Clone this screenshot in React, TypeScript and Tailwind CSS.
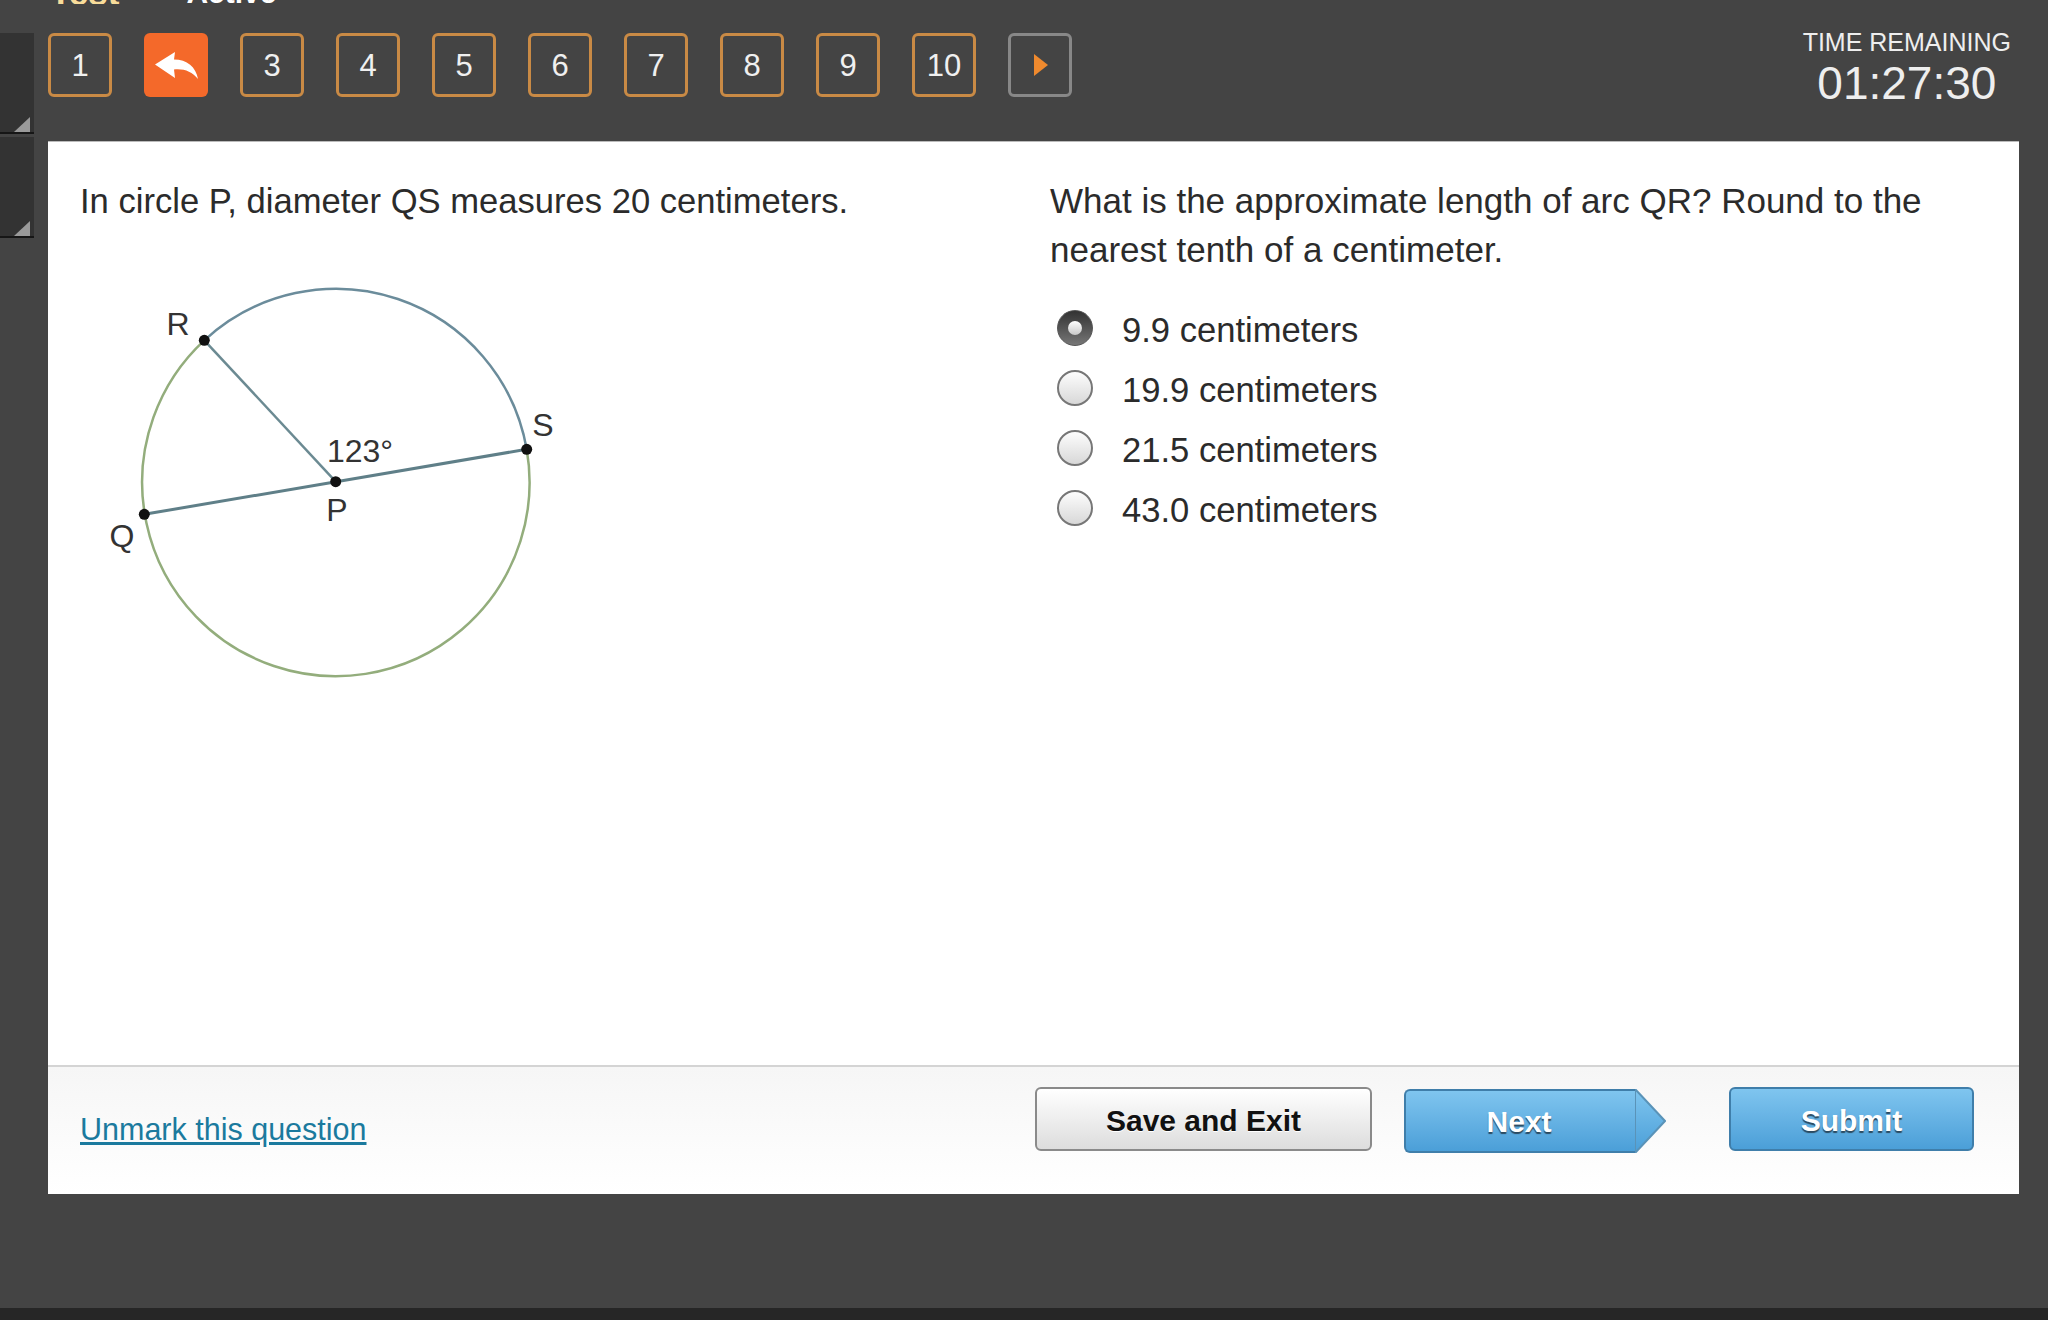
import React from 'react';

const navItems = ['1', 'back', '3', '4', '5', '6', '7', '8', '9', '10'];
const answers = ['9.9 centimeters', '19.9 centimeters', '21.5 centimeters', '43.0 centimeters'];

const NavButton = ({ label }: { label: string }) => {
    if (label === 'back') {
        return (
            <div className="w-16 h-16 rounded-md bg-[#f4692a] flex items-center justify-center">
                <svg width="43" height="27" viewBox="0 0 43 27">
                    <path d="M0 12.5 L20 0 L19 7.5 C32 7.5 41 15 43 27 C37 19.5 29 16.5 19 17.5 L20 26 Z" fill="#fff" />
                </svg>
            </div>
        );
    }
    return (
        <div className="w-16 h-16 pt-[2px] rounded-md border-[3px] border-[#c98a45] flex items-center justify-center text-[31px] text-[#f0f0f0]">
            {label}
        </div>
    );
};

const Radio = ({ checked }: { checked?: boolean }) => {
    if (checked) {
        return (
            <div className="w-9 h-9 rounded-full bg-linear-to-b from-[#333333] to-[#777777] border border-[#555555] flex items-center justify-center">
                <div className="w-3.5 h-3.5 rounded-full bg-linear-to-b from-[#ffffff] to-[#c8c8c8]" />
            </div>
        );
    }
    return <div className="w-9 h-9 rounded-full border-2 border-[#777777] bg-linear-to-b from-[#fdfdfd] to-[#d8d8d8]" />;
};

const CircleDiagram = () => (
    <svg width="500" height="430" viewBox="0 0 500 430" className="ml-[10px] mt-[35px]">
        <path d="M114.3 79.3 A193.7 193.7 0 0 1 436.7 188.3" fill="none" stroke="#6b8c9b" strokeWidth="2.5" />
        <path d="M436.7 188.3 A193.7 193.7 0 1 1 114.3 79.3" fill="none" stroke="#93ad7c" strokeWidth="2.5" />
        <line x1="54.3" y1="253.3" x2="436.7" y2="188.3" stroke="#5f7f88" strokeWidth="3" />
        <line x1="114.3" y1="79.3" x2="245.7" y2="220.7" stroke="#6b8a92" strokeWidth="2.5" />
        <circle cx="114.3" cy="79.3" r="5.5" fill="#111" />
        <circle cx="436.7" cy="188.3" r="5.5" fill="#111" />
        <circle cx="54.3" cy="253.3" r="5.5" fill="#111" />
        <circle cx="245.7" cy="220.7" r="5.5" fill="#111" />
        <g fontSize="32" fill="#333" textAnchor="middle">
            <text x="88" y="74">R</text>
            <text x="453" y="175">S</text>
            <text x="32" y="286">Q</text>
            <text x="247" y="260">P</text>
            <text x="270" y="201">123°</text>
        </g>
    </svg>
);

export default function App() {
    return (
        <div className="w-[2048px] h-[1320px] flex flex-col overflow-hidden bg-[#444444] [font-family:'Liberation_Sans',sans-serif]">
            <div className="flex h-[1308px]">
                {/* Collapsed side rail */}
                <div className="w-[34px] pt-[33px] flex flex-col gap-[3px]">
                    <div className="h-[101px] bg-[#333333] border-b-2 border-[#161616] flex items-end justify-end pr-1">
                        <div className="w-0 h-0 border-l-[16px] border-l-transparent border-b-[15px] border-b-[#9a9a9a]" />
                    </div>
                    <div className="h-[101px] bg-[#333333] border-b-2 border-[#161616] flex items-end justify-end pr-1">
                        <div className="w-0 h-0 border-l-[16px] border-l-transparent border-b-[15px] border-b-[#9a9a9a]" />
                    </div>
                </div>

                <div className="ml-[14px] flex-1 flex flex-col">
                    {/* Clipped title strip */}
                    <div className="h-1 overflow-hidden flex items-end">
                        <span className="ml-[2px] -mb-[7px] text-[35px] leading-[36px] font-bold text-[#f8dc9a]">Test</span>
                        <span className="ml-[67px] -mb-[7px] text-[30px] leading-[36px] font-bold text-white">Active</span>
                    </div>

                    {/* Question nav and timer */}
                    <div className="h-[137px] flex justify-between items-start">
                        <div className="mt-[29px] flex gap-8">
                            {navItems.map((item) => (
                                <NavButton key={item} label={item} />
                            ))}
                            <div className="w-16 h-16 rounded-md border-[3px] border-[#888888] flex items-center justify-center">
                                <svg width="15" height="22" viewBox="0 0 15 22">
                                    <path d="M1 0 L15 11 L1 22 Z" fill="#f08a2e" />
                                </svg>
                            </div>
                        </div>
                        <div className="mt-[23px] mr-[37px] flex flex-col items-center text-[#eeeeee]">
                            <div className="text-[25px] leading-[30px]">TIME REMAINING</div>
                            <div className="text-[46px] leading-[52px]">01:27:30</div>
                        </div>
                    </div>

                    {/* Question panel */}
                    <div className="w-[1971px] h-[1053px] flex flex-col bg-white border-t border-[#bbbbbb]">
                        <div className="flex-1 flex text-[#2b2b2b] text-[35px] leading-[48.5px]">
                            <div className="w-[1002px] pl-8 pt-[35px] flex flex-col">
                                <p className="text-[34.6px]">In circle P, diameter QS measures 20 centimeters.</p>
                                <CircleDiagram />
                            </div>
                            <div className="flex-1 pt-[35px] pr-[60px]">
                                <p>What is the approximate length of arc QR? Round to the nearest tenth of a centimeter.</p>
                                <div className="mt-6 flex flex-col">
                                    {answers.map((answer, i) => (
                                        <div key={answer} className="h-[60px] pl-[7px] flex items-center gap-[29px]">
                                            <Radio checked={i === 0} />
                                            <span className="mt-1 text-[34.6px]">{answer}</span>
                                        </div>
                                    ))}
                                </div>
                            </div>
                        </div>

                        {/* Footer actions */}
                        <div className="h-[129px] border-t-2 border-[#d4d4d4] bg-linear-to-b from-[#f6f6f6] to-[#ffffff] flex items-start pl-8">
                            <a className="mt-[44px] text-[30.5px] leading-[36px] text-[#1b7a9e] underline">Unmark this question</a>
                            <div className="ml-auto mt-5 flex items-start">
                                <div className="w-[337px] h-[64px] pt-[2px] rounded-md border-2 border-[#8a8a8a] bg-linear-to-b from-[#ffffff] to-[#dddddd] flex items-center justify-center text-[30px] font-bold text-[#111111] [text-shadow:0_1px_0_#ffffff]">
                                    Save and Exit
                                </div>
                                <div className="ml-8 mt-[2px] flex">
                                    <div className="w-[231px] h-[64px] pr-[3px] rounded-l-md border-y-2 border-l-2 border-[#3f7eaa] bg-linear-to-b from-[#7fc5ef] to-[#4b9fd8] flex items-center justify-center text-[30px] font-bold text-white [text-shadow:0_2px_1px_#2b4a60]">
                                        Next
                                    </div>
                                    <svg width="31" height="64" viewBox="0 0 31 64">
                                        <defs>
                                            <linearGradient id="nextTip" x1="0" y1="0" x2="0" y2="1">
                                                <stop offset="0" stopColor="#7fc5ef" />
                                                <stop offset="1" stopColor="#4b9fd8" />
                                            </linearGradient>
                                        </defs>
                                        <path d="M0 1 L1 1 L30 32 L1 63 L0 63 Z" fill="url(#nextTip)" stroke="#5a93b8" strokeWidth="2" />
                                    </svg>
                                </div>
                                <div className="ml-[63px] mr-[45px] w-[245px] h-[64px] pt-[2px] rounded-md border-2 border-[#3f7eaa] bg-linear-to-b from-[#7fc5ef] to-[#4b9fd8] flex items-center justify-center text-[30px] font-bold text-white [text-shadow:0_2px_1px_#2b4a60]">
                                    Submit
                                </div>
                            </div>
                        </div>
                    </div>
                </div>
            </div>
            <div className="h-3 bg-[#262626]" />
        </div>
    );
}
